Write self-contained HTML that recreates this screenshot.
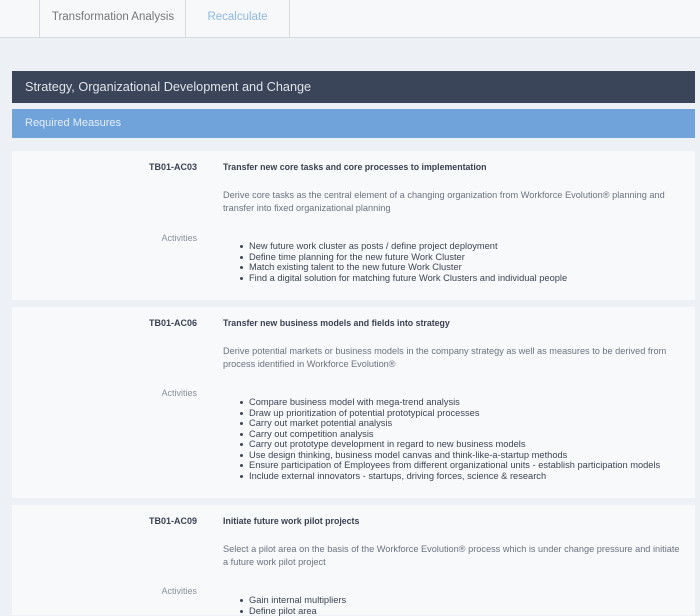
<!DOCTYPE html>
<html><head><style>
*{margin:0;padding:0;box-sizing:border-box}
body{width:700px;height:608px;overflow:hidden;background:#edf0f4;font-family:"Liberation Sans",sans-serif;position:relative}
.top{position:absolute;left:0;top:0;width:700px;height:38px;background:#f7f8fa;border-bottom:1px solid #d6dae0}
.tab{position:absolute;top:0;height:37px;border-left:1px solid #d6dae0;font-size:11.5px;line-height:34px;text-align:center}
.h1{position:absolute;left:12px;top:71px;width:683px;height:32px;background:#3a4559;color:#dfe3ea;font-size:12.7px;line-height:32px;padding-left:13px}
.h2{position:absolute;left:12px;top:109px;width:683px;height:29px;background:#6fa3d9;color:#e6effa;font-size:11px;line-height:29px;padding-left:13px}
.card{position:absolute;left:12px;width:683px;background:#f8f9fb}
.a{position:absolute;white-space:nowrap}
.id{right:498px;font-size:9px;font-weight:bold;color:#3a4152}
.t{left:211px;font-size:8.8px;font-weight:bold;color:#3a4152}
.d{left:211px;width:460px;font-size:9.2px;color:#6b7280;line-height:13px;white-space:normal}
.act{right:498px;font-size:9px;color:#8a909a}
ul{position:absolute;left:249px;font-size:9.3px;color:#3d4454;line-height:10.5px;list-style:none}
li{position:relative;white-space:nowrap}
li:before{content:"";position:absolute;left:-9px;top:4px;width:3px;height:3px;border-radius:50%;background:#3d4454}
</style></head><body>
<div class="top">
<div class="tab" style="left:39px;width:147px;color:#777">Transformation Analysis</div>
<div class="tab" style="left:185px;width:105px;color:#8fb8e4;border-right:1px solid #d6dae0">Recalculate</div>
</div>
<div class="h1">Strategy, Organizational Development and Change</div>
<div class="h2">Required Measures</div>

<div class="card" style="top:151px;height:149px">
<div class="a id" style="top:11px">TB01-AC03</div>
<div class="a t" style="top:11px">Transfer new core tasks and core processes to implementation</div>
<div class="a d" style="top:38px">Derive core tasks as the central element of a changing organization from Workforce Evolution® planning and transfer into fixed organizational planning</div>
<div class="a act" style="top:82px">Activities</div>
</div>
<ul style="top:241px">
<li>New future work cluster as posts / define project deployment</li>
<li>Define time planning for the new future Work Cluster</li>
<li>Match existing talent to the new future Work Cluster</li>
<li>Find a digital solution for matching future Work Clusters and individual people</li>
</ul>

<div class="card" style="top:307px;height:191px">
<div class="a id" style="top:11px">TB01-AC06</div>
<div class="a t" style="top:11px">Transfer new business models and fields into strategy</div>
<div class="a d" style="top:38px">Derive potential markets or business models in the company strategy as well as measures to be derived from process identified in Workforce Evolution®</div>
<div class="a act" style="top:81px">Activities</div>
</div>
<ul style="top:397px">
<li>Compare business model with mega-trend analysis</li>
<li>Draw up prioritization of potential prototypical processes</li>
<li>Carry out market potential analysis</li>
<li>Carry out competition analysis</li>
<li>Carry out prototype development in regard to new business models</li>
<li>Use design thinking, business model canvas and think-like-a-startup methods</li>
<li>Ensure participation of Employees from different organizational units - establish participation models</li>
<li>Include external innovators - startups, driving forces, science &amp; research</li>
</ul>

<div class="card" style="top:505px;height:110px">
<div class="a id" style="top:11px">TB01-AC09</div>
<div class="a t" style="top:11px">Initiate future work pilot projects</div>
<div class="a d" style="top:38px">Select a pilot area on the basis of the Workforce Evolution® process which is under change pressure and initiate a future work pilot project</div>
<div class="a act" style="top:81px">Activities</div>
</div>
<ul style="top:595px">
<li>Gain internal multipliers</li>
<li>Define pilot area</li>
</ul>
</body></html>
